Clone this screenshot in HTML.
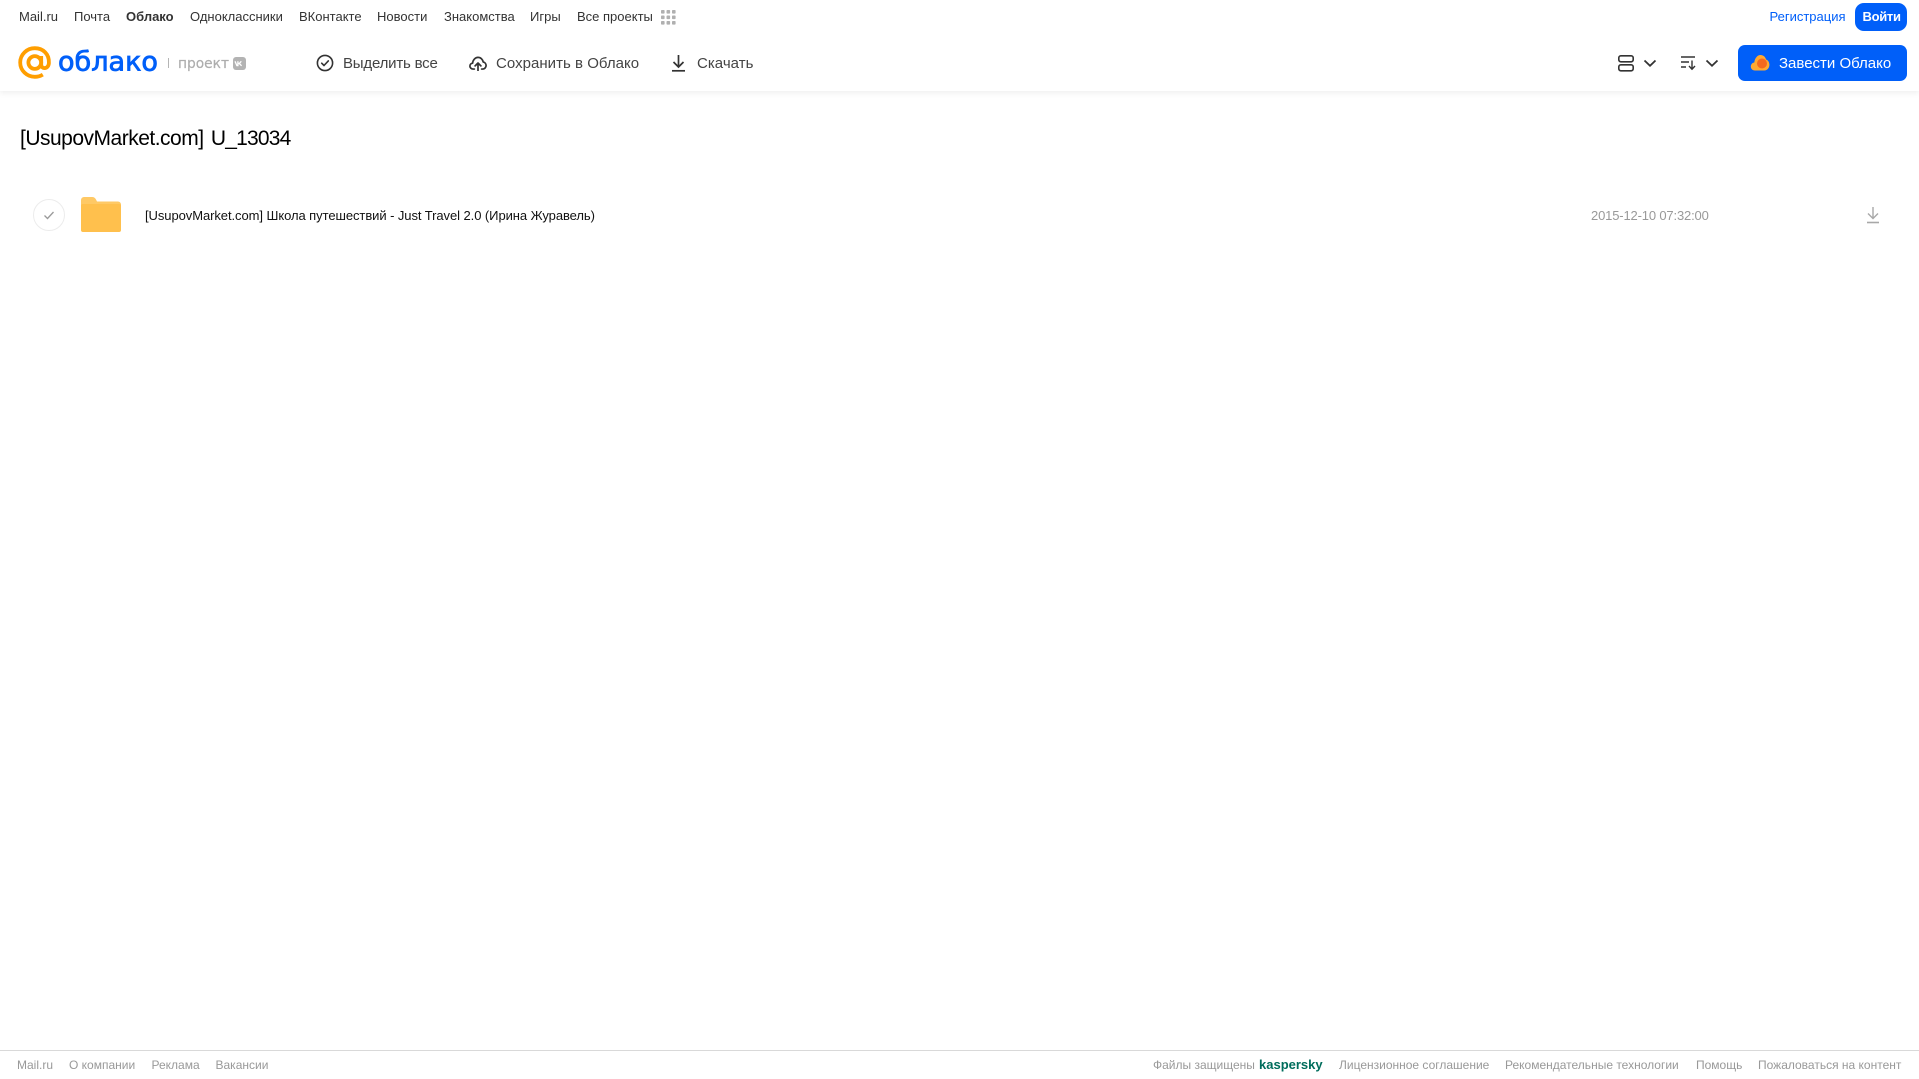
<!DOCTYPE html>
<html lang="ru">
<head>
<meta charset="utf-8">
<title>[UsupovMarket.com] U_13034</title>
<style>
html,body{margin:0;padding:0;background:#fff;}
body{width:1919px;height:1079px;position:relative;overflow:hidden;font-family:"Liberation Sans",Arial,sans-serif;color:#333;}
.t{position:absolute;white-space:nowrap;line-height:18px;}
.n{top:8px;font-size:13px;color:#333;}
.tb{top:55px;font-size:15px;line-height:18px;color:#444;}
.f{top:1056px;font-size:12px;color:#999;}
svg{position:absolute;display:block;}
#hdr{position:absolute;left:0;top:0;width:1919px;height:91px;background:#fff;box-shadow:0 2px 6px rgba(0,0,0,.07);}
#ftl{position:absolute;left:0;top:1050px;width:1919px;height:1px;background:#d9d9d9;}
.btn{position:absolute;background:#005ff9;}
</style>
</head>
<body>
<div id="hdr"></div>

<span class="t n" style="left:19px">Mail.ru</span>
<span class="t n" style="left:74px">Почта</span>
<span class="t n" style="left:126px;font-weight:bold">Облако</span>
<span class="t n" style="left:190px">Одноклассники</span>
<span class="t n" style="left:299px">ВКонтакте</span>
<span class="t n" style="left:377px">Новости</span>
<span class="t n" style="left:444px">Знакомства</span>
<span class="t n" style="left:530px">Игры</span>
<span class="t n" style="left:577px">Все проекты</span>
<svg style="left:661px;top:10px" width="15" height="15" viewBox="0 0 15 15" fill="#b0b0b0">
<rect x="0" y="0" width="3.6" height="3.6" rx=".8"/><rect x="5.5" y="0" width="3.6" height="3.6" rx=".8"/><rect x="11" y="0" width="3.6" height="3.6" rx=".8"/>
<rect x="0" y="5.5" width="3.6" height="3.6" rx=".8"/><rect x="5.5" y="5.5" width="3.6" height="3.6" rx=".8"/><rect x="11" y="5.5" width="3.6" height="3.6" rx=".8"/>
<rect x="0" y="11" width="3.6" height="3.6" rx=".8"/><rect x="5.5" y="11" width="3.6" height="3.6" rx=".8"/><rect x="11" y="11" width="3.6" height="3.6" rx=".8"/>
</svg>

<span class="t n" style="left:1769.500px;color:#005ff9">Регистрация</span>
<div class="btn" style="left:1855px;top:3px;width:52px;height:28px;border-radius:9px"></div>
<span class="t n" style="left:1862.500px;color:#fff;font-weight:bold;letter-spacing:-.3px">Войти</span>

<!-- logo -->
<svg style="left:18px;top:46px" width="36" height="34" viewBox="0 0 36 34" fill="none" stroke="#ff9e00" stroke-width="3.800">
<circle cx="16.800" cy="16.500" r="6.400"/>
<path d="M23.200 10v8.500c0 5 7.300 5 7.700-1.500C31.400 8 25 2.200 16.800 2.200 8.800 2.200 2.200 8.500 2.200 16.500S8.800 30.800 16.800 30.800c3 0 5.500-.7 8-2.200"/>
</svg>
<svg style="left:56px;top:42px" width="106" height="40" viewBox="0 0 106 40">
<text x="2" y="28.500" font-family="DejaVu Sans,sans-serif" font-size="27" fill="#005ff9" stroke="#005ff9" stroke-width=".8" textLength="100" lengthAdjust="spacingAndGlyphs">облако</text>
</svg>
<div style="position:absolute;left:168px;top:58px;width:1px;height:10px;background:#b5b5b5"></div>
<svg style="left:176px;top:52px" width="56" height="22" viewBox="0 0 56 22">
<text x="2" y="16" font-family="DejaVu Sans,sans-serif" font-size="14" fill="#adadad" stroke="#adadad" stroke-width=".2" textLength="51" lengthAdjust="spacingAndGlyphs">проект</text>
</svg>
<svg style="left:233px;top:57px" width="13" height="13" viewBox="0 0 13 13">
<rect width="13" height="13" rx="3" fill="#b3b3b3"/>
<path d="M2 4.300l1.900 4.300h1V4.300M5 6.500h1.300l2-2.200M6.300 6.500l2.300 2.300" fill="none" stroke="#fff" stroke-width="1.300"/>
</svg>

<!-- toolbar -->
<svg style="left:316px;top:54px" width="18" height="18" viewBox="0 0 18 18" fill="none" stroke="#333" stroke-width="1.600">
<circle cx="9" cy="9" r="7.600"/><path d="M5.700 9.200l2.300 2.300 4.300-4.600" stroke-linecap="round" stroke-linejoin="round"/>
</svg>
<span class="t tb" style="left:343px;letter-spacing:-.2px">Выделить все</span>
<svg style="left:469px;top:56px" width="18" height="15.300" viewBox="0 0 20 17" fill="none" stroke="#333" stroke-width="1.900" stroke-linecap="round" stroke-linejoin="round">
<path d="M6 14.500H4.500C2.500 14.500 1 13 1 11.200c0-1.700 1.300-3 3-3.200C4.300 4.300 7 1.500 10 1.500c3 0 5.300 2.300 5.800 5.200 1.800.3 3.200 2 3.200 3.900 0 2.200-1.700 3.900-3.800 3.900H14"/>
<path d="M10 16.500V8M6.800 11L10 7.800 13.200 11"/>
</svg>
<span class="t tb" style="left:496px;letter-spacing:.03px">Сохранить в Облако</span>
<svg style="left:671px;top:54px" width="15" height="18" viewBox="0 0 15 18" fill="none" stroke="#333" stroke-width="1.700">
<path d="M7.500 1v11.500M2.500 8l5 5 5-5"/><path d="M1 16.800h13"/>
</svg>
<span class="t tb" style="left:697px;letter-spacing:.03px">Скачать</span>

<svg style="left:1618px;top:55px" width="16" height="17" viewBox="0 0 16 17" fill="none" stroke="#333" stroke-width="1.600">
<rect x=".8" y=".8" width="14.400" height="6" rx="2"/><rect x=".8" y="9.800" width="14.400" height="6" rx="2"/>
</svg>
<svg style="left:1643px;top:59px" width="14" height="9" viewBox="0 0 14 9" fill="none" stroke="#333" stroke-width="1.800"><path d="M1.500 1.500L7 6.800l5.500-5.300"/></svg>
<svg style="left:1681px;top:55px" width="16" height="16" viewBox="0 0 16 16" fill="none" stroke="#333" stroke-width="1.400">
<path d="M0 2h14M0 7h8M0 12h5M11 5.500V14M8 11l3 3.200 3-3.200"/>
</svg>
<svg style="left:1705px;top:59px" width="14" height="9" viewBox="0 0 14 9" fill="none" stroke="#333" stroke-width="1.800"><path d="M1.500 1.500L7 6.800l5.500-5.300"/></svg>

<div class="btn" style="left:1738px;top:45px;width:169px;height:36px;border-radius:7px"></div>
<svg style="left:1750px;top:54px" width="20" height="17" viewBox="0 0 20 17">
<path d="M5 16.500C2.200 16.500.8 14.500.8 12.500c0-2.200 1.600-3.800 3.500-4C4.800 4 7.500 1 10.500 1c2.700 0 5 1.900 5.500 4.500 2 .6 3.400 2.700 3.400 5.300 0 3.200-2.200 5.700-5 5.700z" fill="#ffa930"/>
<circle cx="12" cy="9.500" r="5" fill="#f4691e"/>
</svg>
<span class="t tb" style="left:1779px;color:#fff">Завести Облако</span>

<!-- content -->
<span class="t" style="left:20px;top:127px;font-size:21px;line-height:24px;color:#000;letter-spacing:-.5px;word-spacing:2px">[UsupovMarket.com] <span style="letter-spacing:-.8px">U_13034</span></span>

<svg style="left:33px;top:199px" width="32" height="32" viewBox="0 0 32 32" fill="none">
<circle cx="16" cy="16" r="15.500" stroke="#ececec"/>
<path d="M11.500 16.500l3 3 6-6.500" stroke="#9a9a9a" stroke-width="1.300"/>
</svg>
<svg style="left:81px;top:197px" width="40" height="35" viewBox="0 0 40 35">
<path d="M0 3a3 3 0 0 1 3-3h8c2 0 3 .8 4 2.500L16 4.500h21a3 3 0 0 1 3 3V32a3 3 0 0 1-3 3H3a3 3 0 0 1-3-3z" fill="#ffc965"/>
<rect x="0" y="7" width="40" height="28" rx="2" fill="#ffc04d"/>
</svg>
<span class="t" style="left:145px;top:207px;font-size:13px;color:#111;letter-spacing:-.07px">[UsupovMarket.com] Школа путешествий - Just Travel 2.0 (Ирина Журавель)</span>
<span class="t" style="left:1591px;top:207px;font-size:13px;color:#999;letter-spacing:-.16px">2015-12-10 07:32:00</span>
<svg style="left:1866px;top:206px" width="14" height="18" viewBox="0 0 14 18" fill="none" stroke="#a8a8a8" stroke-width="1.400">
<path d="M7 1v11M2 7.500l5 5 5-5"/><path d="M1 16.500h12" stroke-width="1.600"/>
</svg>

<!-- footer -->
<div id="ftl"></div>
<span class="t f" style="left:17px">Mail.ru</span>
<span class="t f" style="left:69px">О компании</span>
<span class="t f" style="left:151.500px">Реклама</span>
<span class="t f" style="left:215.500px">Вакансии</span>
<span class="t f" style="left:1153px">Файлы защищены</span>
<span class="t f" style="left:1259px;color:#006d5c;font-weight:bold;font-size:13px">kaspersky</span>
<span class="t f" style="left:1339px">Лицензионное соглашение</span>
<span class="t f" style="left:1505px">Рекомендательные технологии</span>
<span class="t f" style="left:1696px">Помощь</span>
<span class="t f" style="left:1758px">Пожаловаться на контент</span>
</body>
</html>
